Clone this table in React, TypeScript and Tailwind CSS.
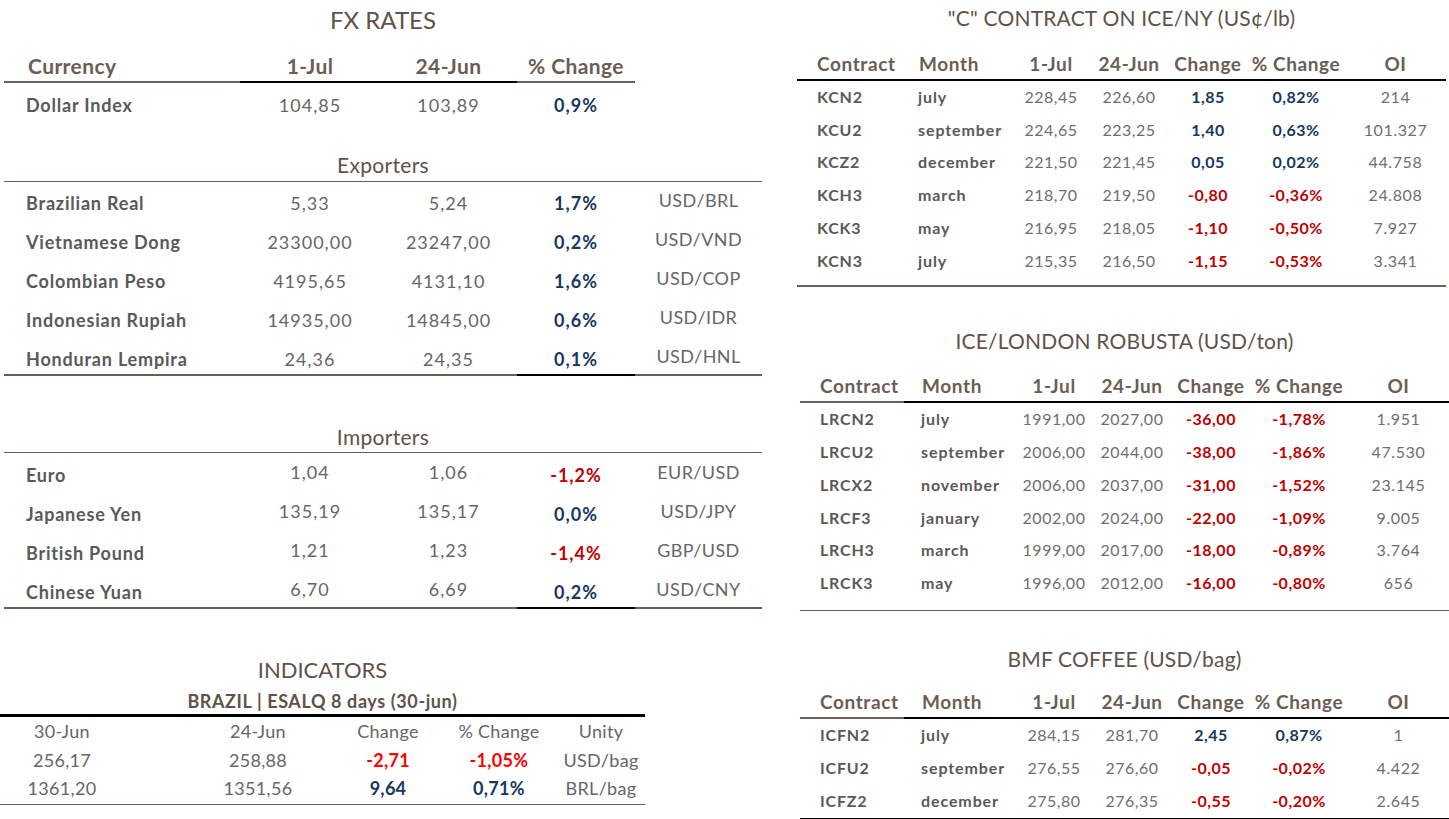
import React from "react";

type Tone = "blue" | "red";

const toneCls = (t: Tone) => (t === "blue" ? "text-[#17375e]" : "text-[#c00000]");

const fxCols = "grid grid-cols-[236px_140px_137px_118px_127px]";

function FxRow({
  label,
  a,
  b,
  pct,
  tone,
  unit,
  last,
  raise,
}: {
  label: string;
  a: string;
  b: string;
  pct: string;
  tone: Tone;
  unit: string;
  last?: boolean;
  raise?: boolean;
}) {
  const pb = last ? "pb-[3px]" : "pb-[5px]";
  const pbNum = raise ? (last ? "pb-[6px]" : "pb-[8px]") : pb;
  const pbUnit = last ? "pb-[6px]" : "pb-[8px]";
  return (
    <div className={`${fxCols} h-[38.9px] text-[18px] leading-[24px]`}>
      <div className={`flex items-end pl-[22px] font-bold tracking-[0.8px] text-[#595959] ${pb} ${last ? "border-b-2 border-[#6b5e52]" : ""}`}>{label}</div>
      <div className={`flex items-end justify-center tracking-[1px] text-[#666666] ${pbNum} ${last ? "border-b-2 border-[#6b5e52]" : ""}`}>{a}</div>
      <div className={`flex items-end justify-center tracking-[1px] text-[#666666] ${pbNum} ${last ? "border-b-2 border-[#6b5e52]" : ""}`}>{b}</div>
      <div className={`flex items-end justify-center font-bold tracking-[1px] ${toneCls(tone)} ${pb} ${last ? "border-b-2 border-black" : ""}`}>{pct}</div>
      <div className={`flex items-end justify-center tracking-[0.4px] text-[#666666] ${pbUnit} ${last ? "border-b-2 border-[#6b5e52]" : ""}`}>{unit}</div>
    </div>
  );
}

function FxSection() {
  const exporters: [string, string, string, string, Tone, string][] = [
    ["Brazilian Real", "5,33", "5,24", "1,7%", "blue", "USD/BRL"],
    ["Vietnamese Dong", "23300,00", "23247,00", "0,2%", "blue", "USD/VND"],
    ["Colombian Peso", "4195,65", "4131,10", "1,6%", "blue", "USD/COP"],
    ["Indonesian Rupiah", "14935,00", "14845,00", "0,6%", "blue", "USD/IDR"],
    ["Honduran Lempira", "24,36", "24,35", "0,1%", "blue", "USD/HNL"],
  ];
  const importers: [string, string, string, string, Tone, string][] = [
    ["Euro", "1,04", "1,06", "-1,2%", "red", "EUR/USD"],
    ["Japanese Yen", "135,19", "135,17", "0,0%", "blue", "USD/JPY"],
    ["British Pound", "1,21", "1,23", "-1,4%", "red", "GBP/USD"],
    ["Chinese Yuan", "6,70", "6,69", "0,2%", "blue", "USD/CNY"],
  ];
  return (
    <div className="w-[762px] pl-[4px]">
      <div className="h-[40px] flex items-center justify-center text-[24px] text-[#5f5248]">FX RATES</div>
      <div className="grid grid-cols-[236px_140px_137px_118px] h-[43px] text-[21px] leading-[25px] font-bold tracking-[0.4px] text-[#6b5d53]">
        <div className="flex items-end pl-[24px] pb-[3px] border-b-2 border-[#6b5e52]">Currency</div>
        <div className="flex items-end justify-center pb-[3px] border-b-2 border-black">1-Jul</div>
        <div className="flex items-end justify-center pb-[3px] border-b-2 border-black">24-Jun</div>
        <div className="flex items-end justify-center pb-[3px] border-b-2 border-[#6b5e52]">% Change</div>
      </div>
      <div className={`${fxCols} h-[44px] text-[18px] leading-[24px] items-center`}>
        <div className="pl-[22px] font-bold tracking-[0.8px] text-[#595959]">Dollar Index</div>
        <div className="text-center tracking-[1px] text-[#666666]">104,85</div>
        <div className="text-center tracking-[1px] text-[#666666]">103,89</div>
        <div className="text-center font-bold tracking-[1px] text-[#17375e]">0,9%</div>
        <div />
      </div>
      <div className="h-[54.5px] flex items-end justify-center pb-[3px] border-b-[1.5px] border-[#6b5e52] text-[21px] leading-[26px] tracking-[0.3px] text-[#5f5248]">
        Exporters
      </div>
      {exporters.map((r, i) => (
        <FxRow key={r[0]} label={r[0]} a={r[1]} b={r[2]} pct={r[3]} tone={r[4]} unit={r[5]} last={i === exporters.length - 1} />
      ))}
      <div className="h-[77px] flex items-end justify-center pb-[2px] border-b-[1.5px] border-[#6b5e52] text-[21px] leading-[26px] tracking-[0.3px] text-[#5f5248]">
        Importers
      </div>
      {importers.map((r, i) => (
        <FxRow key={r[0]} label={r[0]} a={r[1]} b={r[2]} pct={r[3]} tone={r[4]} unit={r[5]} last={i === importers.length - 1} raise />
      ))}
    </div>
  );
}

function Indicators() {
  const cells = (vals: React.ReactNode[], extra: string) => (
    <div className={`flex items-center text-[18px] leading-[24px] ${extra}`}>
      <div className="w-[124px] text-center">{vals[0]}</div>
      <div className="ml-[70px] w-[128px] text-center">{vals[1]}</div>
      <div className="ml-[18px] w-[96px] text-center">{vals[2]}</div>
      <div className="ml-[12px] w-[102px] text-center">{vals[3]}</div>
      <div className="ml-[10px] w-[82px] text-center">{vals[4]}</div>
    </div>
  );
  return (
    <div className="w-[645px] mt-[44px]">
      <div className="h-[34px] flex items-center justify-center text-[22px] text-[#5f5248]">INDICATORS</div>
      <div className="h-[30px] flex items-center justify-center pt-[2px] border-b-[3px] border-black text-[18px] font-bold tracking-[0.6px] text-[#5f5248]">
        BRAZIL | ESALQ 8 days (30-jun)
      </div>
      <div className="text-[#666666] tracking-[0.3px]">
        {cells(["30-Jun", "24-Jun", "Change", "% Change", "Unity"], "h-[29px]")}
        {cells(
          [
            "256,17",
            "258,88",
            <span className="font-bold text-[#ff0000]">-2,71</span>,
            <span className="font-bold text-[#ff0000]">-1,05%</span>,
            "USD/bag",
          ],
          "h-[29px]"
        )}
        {cells(
          [
            "1361,20",
            "1351,56",
            <span className="font-bold text-[#17375e]">9,64</span>,
            <span className="font-bold text-[#17375e]">0,71%</span>,
            "BRL/bag",
          ],
          "border-b-[1.5px] border-[#6b5e52] h-[30px] pb-[2px]"
        )}
      </div>
    </div>
  );
}

const rCols = "grid grid-cols-[104px_112px_76px_80px_78px_98px_101px]";

type FRow = [string, string, string, string, string, string, string];

function Futures({
  title,
  rows,
  allBlackHeader,
  bottomBlack,
  headerH,
  className,
  bottomGap,
}: {
  title: string;
  rows: FRow[];
  allBlackHeader?: boolean;
  bottomBlack?: boolean;
  headerH: string;
  className: string;
  bottomGap: string;
}) {
  const heads = ["Contract", "Month", "1-Jul", "24-Jun", "Change", "% Change", "OI"];
  return (
    <div className={`w-[649px] ${className}`}>
      <div className="h-[36px] flex items-center justify-center text-[21px] tracking-[0.2px] text-[#5f5248]">{title}</div>
      <div className={`${rCols} ${headerH} text-[19px] leading-[24px] font-bold tracking-[0.6px] text-[#6b5d53]`}>
        {heads.map((h, i) => (
          <div
            key={h}
            className={`flex items-end pb-[3px] whitespace-nowrap border-b-[2.5px] ${i === 0 && !allBlackHeader ? "border-[#6b5e52]" : "border-black"} ${
              i === 0 ? "pl-[20px]" : i === 1 ? "pl-[18px]" : "justify-center"
            }`}
          >
            {h}
          </div>
        ))}
      </div>
      {rows.map((r) => {
        const neg = r[4].startsWith("-");
        const tc = neg ? "text-[#c00000]" : "text-[#17375e]";
        return (
          <div key={r[0]} className={`${rCols} h-[32.8px] items-center text-[16px] leading-[22px]`}>
            <div className="pl-[20px] font-bold tracking-[0.8px] text-[#595959]">{r[0]}</div>
            <div className="pl-[17px] font-bold tracking-[0.9px] text-[#595959] whitespace-nowrap">{r[1]}</div>
            <div className="text-center tracking-[0.5px] text-[#6e6e6e]">{r[2]}</div>
            <div className="text-center tracking-[0.5px] text-[#6e6e6e]">{r[3]}</div>
            <div className={`text-center font-bold tracking-[0.5px] ${tc}`}>{r[4]}</div>
            <div className={`text-center font-bold tracking-[0.5px] ${tc}`}>{r[5]}</div>
            <div className="text-center tracking-[0.6px] text-[#6e6e6e]">{r[6]}</div>
          </div>
        );
      })}
      <div className={`${bottomGap} h-[1.5px] ${bottomBlack ? "bg-black" : "bg-[#6b5e52]"}`} />
    </div>
  );
}

export default function App() {
  const kc: FRow[] = [
    ["KCN2", "july", "228,45", "226,60", "1,85", "0,82%", "214"],
    ["KCU2", "september", "224,65", "223,25", "1,40", "0,63%", "101.327"],
    ["KCZ2", "december", "221,50", "221,45", "0,05", "0,02%", "44.758"],
    ["KCH3", "march", "218,70", "219,50", "-0,80", "-0,36%", "24.808"],
    ["KCK3", "may", "216,95", "218,05", "-1,10", "-0,50%", "7.927"],
    ["KCN3", "july", "215,35", "216,50", "-1,15", "-0,53%", "3.341"],
  ];
  const lrc: FRow[] = [
    ["LRCN2", "july", "1991,00", "2027,00", "-36,00", "-1,78%", "1.951"],
    ["LRCU2", "september", "2006,00", "2044,00", "-38,00", "-1,86%", "47.530"],
    ["LRCX2", "november", "2006,00", "2037,00", "-31,00", "-1,52%", "23.145"],
    ["LRCF3", "january", "2002,00", "2024,00", "-22,00", "-1,09%", "9.005"],
    ["LRCH3", "march", "1999,00", "2017,00", "-18,00", "-0,89%", "3.764"],
    ["LRCK3", "may", "1996,00", "2012,00", "-16,00", "-0,80%", "656"],
  ];
  const icf: FRow[] = [
    ["ICFN2", "july", "284,15", "281,70", "2,45", "0,87%", "1"],
    ["ICFU2", "september", "276,55", "276,60", "-0,05", "-0,02%", "4.422"],
    ["ICFZ2", "december", "275,80", "276,35", "-0,55", "-0,20%", "2.645"],
  ];
  return (
    <div className="w-[1449px] h-[819px] overflow-hidden bg-white flex font-[Lato,'Liberation_Sans',sans-serif]">
      <div className="w-[797px] shrink-0">
        <FxSection />
        <Indicators />
      </div>
      <div className="w-[652px] shrink-0">
        <Futures title={'"C" CONTRACT ON ICE/NY (US¢/lb)'} rows={kc} allBlackHeader headerH="h-[44.5px]" className="" bottomGap="mt-[8px]" />
        <Futures title="ICE/LONDON ROBUSTA (USD/ton)" rows={lrc} headerH="h-[44px]" className="ml-[3px] mt-[36px]" bottomGap="mt-[10px]" />
        <Futures title="BMF COFFEE (USD/bag)" rows={icf} bottomBlack headerH="h-[42px]" className="ml-[3px] mt-[30px]" bottomGap="mt-[1px]" />
      </div>
    </div>
  );
}
